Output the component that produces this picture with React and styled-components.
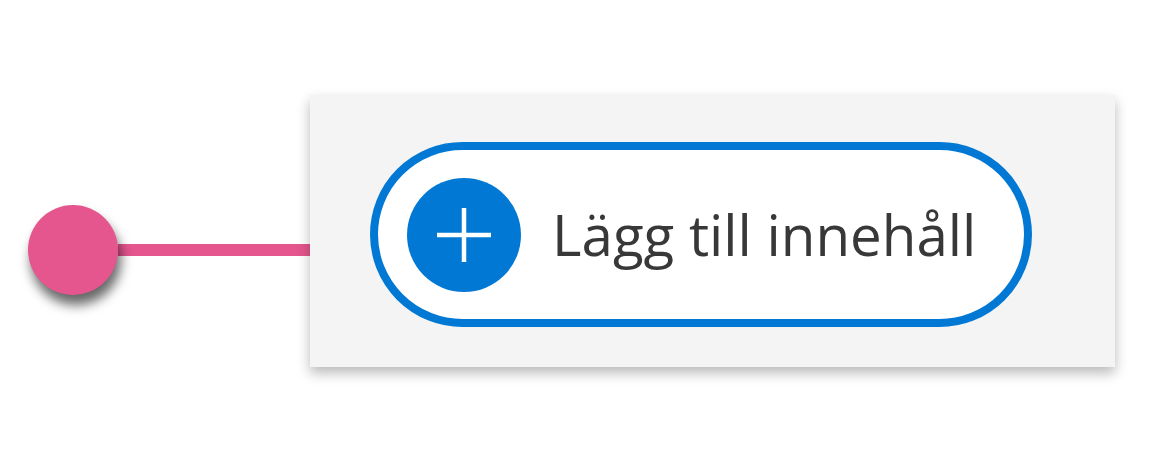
import React from "react";
import styled, { createGlobalStyle } from "styled-components";

const GlobalStyle = createGlobalStyle`
  html, body {
    margin: 0;
    background: #ffffff;
  }
`;

const Page = styled.div`
  width: 1167px;
  height: 449px;
  box-sizing: border-box;
  padding-top: 95px;
  padding-left: 28px;
  display: flex;
  align-items: flex-start;
`;

const Connector = styled.div`
  display: flex;
  align-items: center;
  margin-top: 110px;
`;

const Dot = styled.div`
  width: 90px;
  height: 90px;
  border-radius: 50%;
  background: #e4568d;
  box-shadow: 3px 10px 12px rgba(0, 0, 0, 0.6);
  position: relative;
  z-index: 1;
`;

const Line = styled.div`
  width: 192px;
  height: 12px;
  background: #e4568d;
`;

const Panel = styled.div`
  width: 805px;
  height: 272px;
  box-sizing: border-box;
  padding: 47px 0 0 60px;
  background: #f4f4f4;
  box-shadow: 0 6px 12px rgba(0, 0, 0, 0.28);
`;

const AddButton = styled.button`
  width: 662px;
  height: 185px;
  box-sizing: border-box;
  border: 8px solid #0078d4;
  border-radius: 93px;
  background: #ffffff;
  display: flex;
  align-items: center;
  gap: 31px;
  padding: 0 0 0 29px;
  cursor: pointer;
`;

const PlusCircle = styled.span`
  width: 114px;
  height: 114px;
  border-radius: 50%;
  background: #0078d4;
  display: flex;
  align-items: center;
  justify-content: center;
  flex-shrink: 0;
`;

const Label = styled.span`
  font-family: "Open Sans", "Liberation Sans", sans-serif;
  font-size: 56.5px;
  font-weight: 400;
  color: #383838;
  white-space: nowrap;
`;

export default function App() {
  return (
    <>
      <GlobalStyle />
      <Page>
        <Connector>
          <Dot />
          <Line />
        </Connector>
        <Panel>
          <AddButton>
            <PlusCircle>
              <svg width="56" height="56" viewBox="0 0 56 56">
                <path d="M28 1v54M1 28h54" stroke="#fff" strokeWidth="4.5" fill="none" />
              </svg>
            </PlusCircle>
            <Label>Lägg till innehåll</Label>
          </AddButton>
        </Panel>
      </Page>
    </>
  );
}
